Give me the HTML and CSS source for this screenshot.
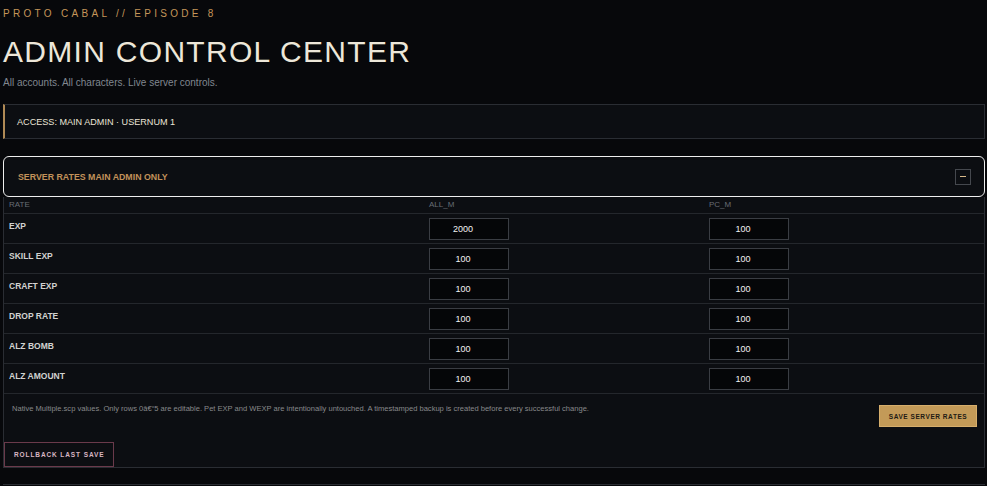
FILE: index.html
```html
<!DOCTYPE html>
<html lang="en">
<head>
<meta charset="utf-8">
<title>Admin Control Center</title>
<link rel="stylesheet" href="styles.css">
</head>
<body>
<div class="page">
  <header class="hero">
    <p class="eyebrow">PROTO CABAL // EPISODE 8</p>
    <h1 class="title">ADMIN CONTROL CENTER</h1>
    <p class="lede">All accounts. All characters. Live server controls.</p>
  </header>

  <div class="access">ACCESS: MAIN ADMIN · USERNUM 1</div>

  <section class="panel">
    <div class="panel-head">
      <span class="panel-title">SERVER RATES MAIN ADMIN ONLY</span>
      <button class="toggle" type="button" aria-label="Collapse"><span class="minus"></span></button>
    </div>
    <div class="panel-body">
      <div class="rates">
        <div class="row head">
          <div class="cell">RATE</div>
          <div class="cell">ALL_M</div>
          <div class="cell">PC_M</div>
        </div>
        <div class="row">
          <div class="cell label">EXP</div>
          <div class="cell"><input class="rate-input" value="2000"></div>
          <div class="cell"><input class="rate-input" value="100"></div>
        </div>
        <div class="row">
          <div class="cell label">SKILL EXP</div>
          <div class="cell"><input class="rate-input" value="100"></div>
          <div class="cell"><input class="rate-input" value="100"></div>
        </div>
        <div class="row">
          <div class="cell label">CRAFT EXP</div>
          <div class="cell"><input class="rate-input" value="100"></div>
          <div class="cell"><input class="rate-input" value="100"></div>
        </div>
        <div class="row">
          <div class="cell label">DROP RATE</div>
          <div class="cell"><input class="rate-input" value="100"></div>
          <div class="cell"><input class="rate-input" value="100"></div>
        </div>
        <div class="row">
          <div class="cell label">ALZ BOMB</div>
          <div class="cell"><input class="rate-input" value="100"></div>
          <div class="cell"><input class="rate-input" value="100"></div>
        </div>
        <div class="row">
          <div class="cell label">ALZ AMOUNT</div>
          <div class="cell"><input class="rate-input" value="100"></div>
          <div class="cell"><input class="rate-input" value="100"></div>
        </div>
      </div>
      <div class="panel-foot">
        <p class="note">Native Multiple.scp values. Only rows 0â€“5 are editable. Pet EXP and WEXP are intentionally untouched. A timestamped backup is created before every successful change.</p>
        <button class="save" type="button">SAVE SERVER RATES</button>
      </div>
      <div class="rollback-row">
        <button class="rollback" type="button">ROLLBACK LAST SAVE</button>
      </div>
    </div>
  </section>

  <section class="panel next"></section>
</div>
</body>
</html>
```

FILE: styles.css
```css
* { box-sizing: border-box; }

html, body {
  margin: 0;
  background: #07080b;
  height: 100%;
  overflow: hidden;
}

body {
  font-family: "Liberation Sans", Arial, sans-serif;
  color: #e6e0d2;
}

.page {
  padding: 8px 2px 0 3px;
}

.hero { margin: 0; }

.eyebrow {
  margin: 0;
  font-size: 10px;
  line-height: 12px;
  letter-spacing: 3.3px;
  color: #c5965a;
}

.title {
  margin: 14px 0 0;
  font-size: 30px;
  line-height: 36px;
  font-weight: 400;
  letter-spacing: 1.3px;
  color: #ede7d9;
}

.lede {
  margin: 7px 0 0;
  font-size: 10px;
  line-height: 12px;
  color: #808790;
}

.access {
  margin-top: 15px;
  height: 35px;
  display: flex;
  align-items: center;
  padding-left: 12px;
  background: #0c0e12;
  border: 1px solid #2a2d33;
  border-left: 2px solid #b08a55;
  font-size: 9.1px;
  color: #ebe5d7;
}

.panel {
  margin-top: 17px;
  display: flex;
  flex-direction: column;
}

.panel-head {
  height: 41px;
  display: flex;
  align-items: center;
  justify-content: space-between;
  padding: 0 13px 0 14px;
  background: #0c0e12;
  border: 1.5px solid #eeeeee;
  border-radius: 6px;
}

.panel-title {
  font-size: 8.8px;
  font-weight: 700;
  color: #c2925a;
}

.toggle {
  width: 16px;
  height: 16px;
  padding: 0;
  background: #0c0e12;
  border: 1px solid #45484e;
  display: flex;
  align-items: center;
  justify-content: center;
}

.minus {
  display: block;
  width: 6px;
  height: 1px;
  background: #d8b98a;
}

.panel-body {
  background: #0c0e12;
  border: 1px solid #2a2d33;
  border-top: none;
}

.row {
  display: grid;
  grid-template-columns: 3fr 2fr 2fr;
  border-bottom: 1px solid #24272c;
  height: 30px;
}

.row.head {
  height: 17px;
}

.row.head .cell {
  font-size: 8px;
  line-height: 16px;
  color: #686d75;
  padding: 0 5px;
}

.cell {
  padding: 4px 5px 0;
}

.cell.label {
  padding-top: 7px;
  font-size: 8.5px;
  line-height: 10px;
  font-weight: 700;
  color: #d2d2d0;
}

.rate-input {
  display: block;
  width: 80px;
  height: 22px;
  margin: 0;
  padding: 0 12px 0 0;
  background: #050608;
  border: 1px solid #3a3d43;
  color: #f2f2f2;
  text-align: center;
  font-family: "Liberation Sans", Arial, sans-serif;
  font-size: 9px;
}

.panel-foot {
  display: flex;
  justify-content: space-between;
  align-items: flex-start;
  padding: 10px 7px 0 8px;
}

.note {
  margin: 0;
  font-size: 7.55px;
  line-height: 10px;
  color: #88898b;
}

.save {
  width: 98px;
  height: 22px;
  margin-top: 1px;
  padding: 0;
  background: #c39a58;
  border: 1px solid #d6ae6c;
  color: #1e1a14;
  font-family: "Liberation Sans", Arial, sans-serif;
  font-size: 6.5px;
  font-weight: 700;
  letter-spacing: 0.55px;
}

.rollback-row {
  margin-top: 15px;
  display: flex;
}

.rollback {
  height: 25px;
  padding: 0 9px;
  background: #0c0e12;
  border: 1px solid #6a3a4b;
  color: #d8b7c3;
  font-family: "Liberation Sans", Arial, sans-serif;
  font-size: 6.5px;
  font-weight: 700;
  letter-spacing: 0.9px;
}

.panel.next {
  margin-top: 16px;
  height: 1px;
  border-top: 1px solid #2a2d33;
}
```
